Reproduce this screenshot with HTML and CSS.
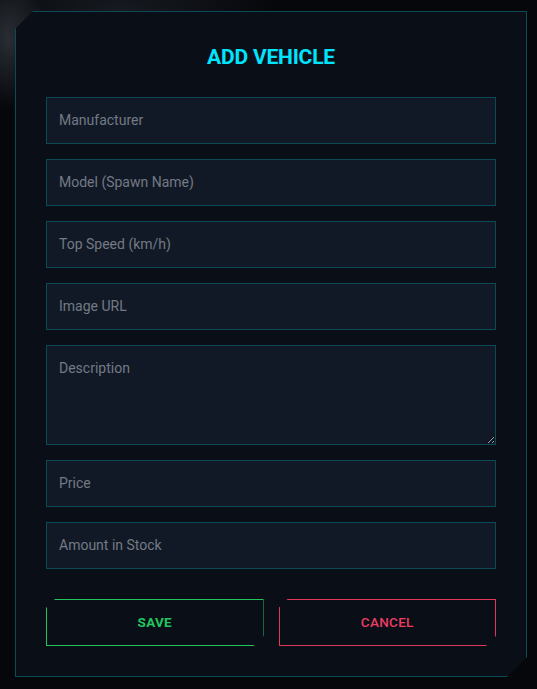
FILE: index.html
```html
<!DOCTYPE html>
<html>
<head>
<meta charset="utf-8">
<link rel="stylesheet" href="styles.css">
</head>
<body>
<div class="panel">
  <h1 class="title">ADD VEHICLE</h1>
  <form class="form">
    <input class="field" type="text" placeholder="Manufacturer">
    <input class="field" type="text" placeholder="Model (Spawn Name)">
    <input class="field" type="text" placeholder="Top Speed (km/h)">
    <input class="field" type="text" placeholder="Image URL">
    <textarea class="field area" placeholder="Description"></textarea>
    <input class="field" type="text" placeholder="Price">
    <input class="field" type="text" placeholder="Amount in Stock">
    <div class="actions">
      <button type="button" class="btn save">SAVE</button>
      <button type="button" class="btn cancel">CANCEL</button>
    </div>
  </form>
</div>
</body>
</html>
```
FILE: styles.css
```css
html, body {
  margin: 0;
  padding: 0;
}
body {
  width: 537px;
  height: 689px;
  overflow: hidden;
  background:
    radial-gradient(ellipse 40px 70px at 8px 40px, rgba(70,74,82,0.55), rgba(70,74,82,0) 100%),
    radial-gradient(ellipse 160px 60px at 120px 10px, rgba(40,44,52,0.5), rgba(40,44,52,0) 100%),
    #05070b;
  font-family: Roboto, "Liberation Sans", sans-serif;
  padding: 11px 0 0 15px;
  box-sizing: border-box;
}
.panel {
  width: 512px;
  box-sizing: border-box;
  background: #0a0e17;
  border: 1px solid #0d4a55;
  padding: 30px;
  clip-path: polygon(18px 0, 100% 0, 100% calc(100% - 20px), calc(100% - 20px) 100%, 0 100%, 0 18px);
}
.title {
  margin: 0 0 25px;
  text-align: center;
  color: #00e5ff;
  font-size: 21px;
  line-height: 30px;
  font-weight: 700;
  letter-spacing: -0.2px;
}
.form {
  display: flex;
  flex-direction: column;
  gap: 15px;
}
.field {
  display: block;
  box-sizing: border-box;
  width: 450px;
  height: 47px;
  margin: 0;
  padding: 0 12px 1px;
  background: #121926;
  border: 1px solid #0d4a55;
  border-radius: 0;
  color: #c8ccd4;
  font-family: Roboto, "Liberation Sans", sans-serif;
  font-size: 14px;
  outline: none;
}
.field::placeholder {
  color: #737a85;
}
.area {
  height: 100px;
  padding: 12px;
  line-height: 20px;
  resize: vertical;
}
.actions {
  display: grid;
  grid-template-columns: 1fr 1fr;
  gap: 15px;
  margin-top: 15px;
}
.btn {
  height: 47px;
  padding: 0 0 2px;
  background: transparent;
  border: 1px solid;
  font-family: Roboto, "Liberation Sans", sans-serif;
  font-size: 13.5px;
  letter-spacing: 0.3px;
  clip-path: polygon(9px 0, 100% 0, 100% calc(100% - 10px), calc(100% - 10px) 100%, 0 100%, 0 9px);
  cursor: pointer;
}
.save {
  color: #22c55e;
  border-color: #22c55e;
  font-weight: 700;
}
.cancel {
  color: #ea3d62;
  border-color: #e3365c;
  font-weight: 500;
}
```
